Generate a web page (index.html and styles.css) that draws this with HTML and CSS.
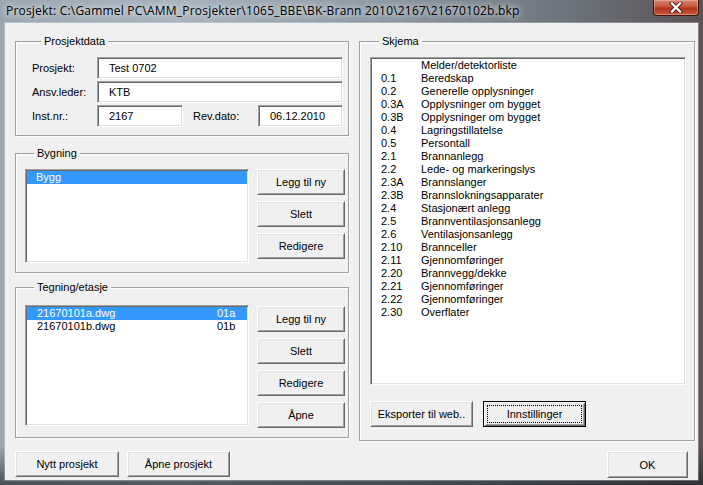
FILE: index.html
```html
<!DOCTYPE html>
<html lang="no">
<head>
<meta charset="utf-8">
<title>Prosjekt</title>
<link rel="stylesheet" href="styles.css">
</head>
<body>
<div class="window">
  <div class="titlebar">
    <span class="title">Prosjekt: C:\Gammel PC\AMM_Prosjekter\1065_BBE\BK-Brann 2010\2167\21670102b.bkp</span>
    <div class="close">
      <svg width="14" height="11" viewBox="0 0 14 11">
        <path d="M3 1.5 L11 9.5 M11 1.5 L3 9.5" stroke="#4a140c" stroke-width="4.2" stroke-linecap="square" fill="none"/>
        <path d="M3 1.5 L11 9.5 M11 1.5 L3 9.5" stroke="#ffffff" stroke-width="2.4" stroke-linecap="square" fill="none"/>
      </svg>
    </div>
  </div>
  <div class="client">
    <div class="col-left">
      <div class="group g-prosjekt">
        <div class="gtitle">Prosjektdata</div>
        <div class="form">
          <span class="lbl">Prosjekt:</span>
          <div class="field span3">Test 0702</div>
          <span class="lbl">Ansv.leder:</span>
          <div class="field span3">KTB</div>
          <span class="lbl">Inst.nr.:</span>
          <div class="field">2167</div>
          <span class="lbl lbl-rev">Rev.dato:</span>
          <div class="field">06.12.2010</div>
        </div>
      </div>

      <div class="group g-bygning">
        <div class="gtitle">Bygning</div>
        <div class="gbody">
          <div class="listbox lb-bygning">
            <div class="row sel">Bygg</div>
          </div>
          <div class="btncol">
            <div class="btn">Legg til ny</div>
            <div class="btn">Slett</div>
            <div class="btn">Redigere</div>
          </div>
        </div>
      </div>

      <div class="group g-tegning">
        <div class="gtitle">Tegning/etasje</div>
        <div class="gbody">
          <div class="listbox lb-tegning">
            <div class="row drow sel"><span class="dname">21670101a.dwg</span><span>01a</span></div>
            <div class="row drow"><span class="dname">21670101b.dwg</span><span>01b</span></div>
          </div>
          <div class="btncol btncol-t">
            <div class="btn">Legg til ny</div>
            <div class="btn">Slett</div>
            <div class="btn">Redigere</div>
            <div class="btn">Åpne</div>
          </div>
        </div>
      </div>
    </div>

    <div class="group g-skjema">
      <div class="gtitle">Skjema</div>
      <div class="listbox lb-skjema">
        <div class="srow"><span class="num"></span><span>Melder/detektorliste</span></div>
        <div class="srow"><span class="num">0.1</span><span>Beredskap</span></div>
        <div class="srow"><span class="num">0.2</span><span>Generelle opplysninger</span></div>
        <div class="srow"><span class="num">0.3A</span><span>Opplysninger om bygget</span></div>
        <div class="srow"><span class="num">0.3B</span><span>Opplysninger om bygget</span></div>
        <div class="srow"><span class="num">0.4</span><span>Lagringstillatelse</span></div>
        <div class="srow"><span class="num">0.5</span><span>Persontall</span></div>
        <div class="srow"><span class="num">2.1</span><span>Brannanlegg</span></div>
        <div class="srow"><span class="num">2.2</span><span>Lede- og markeringslys</span></div>
        <div class="srow"><span class="num">2.3A</span><span>Brannslanger</span></div>
        <div class="srow"><span class="num">2.3B</span><span>Brannslokningsapparater</span></div>
        <div class="srow"><span class="num">2.4</span><span>Stasjonært anlegg</span></div>
        <div class="srow"><span class="num">2.5</span><span>Brannventilasjonsanlegg</span></div>
        <div class="srow"><span class="num">2.6</span><span>Ventilasjonsanlegg</span></div>
        <div class="srow"><span class="num">2.10</span><span>Brannceller</span></div>
        <div class="srow"><span class="num">2.11</span><span>Gjennomføringer</span></div>
        <div class="srow"><span class="num">2.20</span><span>Brannvegg/dekke</span></div>
        <div class="srow"><span class="num">2.21</span><span>Gjennomføringer</span></div>
        <div class="srow"><span class="num">2.22</span><span>Gjennomføringer</span></div>
        <div class="srow"><span class="num">2.30</span><span>Overflater</span></div>
      </div>
      <div class="btnrow">
        <div class="btn btn-wide">Eksporter til web..</div>
        <div class="btn btn-wide default"><span class="focus">Innstillinger</span></div>
      </div>
    </div>

    <div class="bottom-left">
      <div class="btn btn-proj">Nytt prosjekt</div>
      <div class="btn btn-proj2">Åpne prosjekt</div>
    </div>
    <div class="bottom-right">
      <div class="btn btn-ok">OK</div>
    </div>
  </div>
</div>
</body>
</html>
```

FILE: styles.css
```css
* { box-sizing: border-box; }
html, body { margin: 0; padding: 0; }
body {
  width: 703px;
  height: 485px;
  overflow: hidden;
  font-family: "Liberation Sans", Arial, sans-serif;
  font-size: 11px;
  color: #000;
  background: #3a3f44;
}

.window {
  width: 703px;
  height: 485px;
  display: flex;
  flex-direction: column;
  background:
    linear-gradient(180deg, rgba(0,0,0,0) 0%, rgba(0,0,0,0) 92%, rgba(20,24,28,0.6) 100%),
    linear-gradient(90deg, #9aa7b2 0%, #a7b3bd 25%, #8c98a3 55%, #6f7881 78%, #5b5256 100%);
}

.titlebar {
  height: 23px;
  flex: none;
  display: flex;
  justify-content: space-between;
  align-items: flex-start;
  padding: 0 4px 0 6px;
}
.title {
  font-family: "Open Sans", "Noto Sans", sans-serif;
  font-size: 12px;
  letter-spacing: 0.2px;
  line-height: 21px;
  white-space: nowrap;
  color: #000;
  text-shadow: 0 0 6px rgba(255,255,255,0.9), 0 0 10px rgba(255,255,255,0.7);
}
.close {
  width: 46px;
  height: 16px;
  border: 1px solid #3d1510;
  border-top: none;
  border-radius: 0 0 4px 4px;
  background: linear-gradient(180deg, #d58a77 0%, #c9533b 45%, #b0321d 55%, #c65a3f 100%);
  box-shadow: inset 0 0 0 1px rgba(255,220,210,0.35);
  display: flex;
  align-items: center;
  justify-content: center;
}

.client {
  flex: 1;
  margin: 0 5px 5px 5px;
  background: #f0f0f0;
  box-shadow: 0 0 0 1px rgba(255,255,255,0.25);
  display: grid;
  grid-template-columns: 334px 336px;
  grid-template-rows: auto auto;
  column-gap: 10px;
  row-gap: 8px;
  padding: 18px 3px 0 10px;
  align-items: start;
}

/* group boxes */
.group {
  border: 1px solid #a0a0a0;
  box-shadow: 1px 1px 0 #fff, inset 1px 1px 0 #fff;
}
.gtitle {
  margin: -7px 0 0 9px;
  padding: 0 3px;
  line-height: 13px;
  height: 13px;
  background: #f0f0f0;
  width: max-content;
  white-space: nowrap;
}

.g-prosjekt { padding: 0 5px 8px 16px; }
.form {
  margin-top: 9px;
  display: grid;
  grid-template-columns: 65px 86px 75px 85px;
  grid-auto-rows: 22px;
  row-gap: 2px;
  align-items: center;
}
.lbl { white-space: nowrap; }
.lbl-rev { padding-left: 10px; }
.field {
  height: 22px;
  background: #fff;
  border: 1px solid;
  border-color: #a0a0a0 #fff #fff #a0a0a0;
  box-shadow: inset 1px 1px 0 #696969, inset -1px -1px 0 #e3e3e3;
  padding-left: 11px;
  line-height: 20px;
  white-space: nowrap;
}
.span3 { grid-column: 2 / 5; }

.g-bygning { margin-top: 17px; padding: 0 3px 9px 9px; }
.g-tegning { margin-top: 14px; padding: 0 3px 9px 9px; }

.gbody {
  display: flex;
  gap: 8px;
  align-items: flex-start;
}
.g-bygning .gbody { margin-top: 9px; }
.g-tegning .gbody { margin-top: 11px; }

.listbox {
  background: #fff;
  border: 1px solid;
  border-color: #a0a0a0 #fff #fff #a0a0a0;
  box-shadow: inset 1px 1px 0 #696969, inset -1px -1px 0 #e3e3e3;
  padding: 1px;
  overflow: hidden;
}
.lb-bygning { width: 224px; height: 94px; }
.lb-tegning { width: 224px; height: 121px; }

.row {
  height: 13px;
  line-height: 13px;
  padding-left: 9px;
  white-space: nowrap;
}
.row.sel { background: #3399ff; color: #fff; }
.drow { display: flex; padding-left: 10px; }
.dname { width: 180px; }

.btncol {
  width: 88px;
  display: flex;
  flex-direction: column;
  gap: 6px;
}
.btncol-t { margin-top: 1px; }

.btn {
  height: 26px;
  background: #f0f0f0;
  border: 1px solid;
  border-color: #fff #696969 #696969 #fff;
  box-shadow: inset 1px 1px 0 #e3e3e3, inset -1px -1px 0 #a0a0a0;
  display: flex;
  align-items: center;
  justify-content: center;
  white-space: nowrap;
}
.btn.default {
  border: 1px solid #000;
  box-shadow: inset 1px 1px 0 #fff, inset -1px -1px 0 #696969, inset 2px 2px 0 #e3e3e3, inset -2px -2px 0 #a0a0a0;
  padding: 3px;
}
.focus {
  flex: 1;
  align-self: stretch;
  border: 1px dotted #000;
  display: flex;
  align-items: center;
  justify-content: center;
}

.g-skjema { padding: 0 8px 13px 10px; }
.lb-skjema {
  margin-top: 9px;
  width: 316px;
  height: 328px;
  padding: 1px 1px 1px 10px;
}
.srow {
  display: flex;
  height: 13px;
  line-height: 13px;
  white-space: nowrap;
}
.num { width: 40px; flex: none; }

.btnrow {
  margin-top: 16px;
  display: flex;
  gap: 10px;
}
.btn-wide { width: 103px; }

.bottom-left {
  display: flex;
  gap: 8px;
}
.btn-proj { width: 104px; }
.btn-proj2 { width: 103px; }
.bottom-right {
  display: flex;
  justify-content: flex-end;
  padding-right: 7px;
}
.btn-ok { width: 81px; height: 27px; }
```
